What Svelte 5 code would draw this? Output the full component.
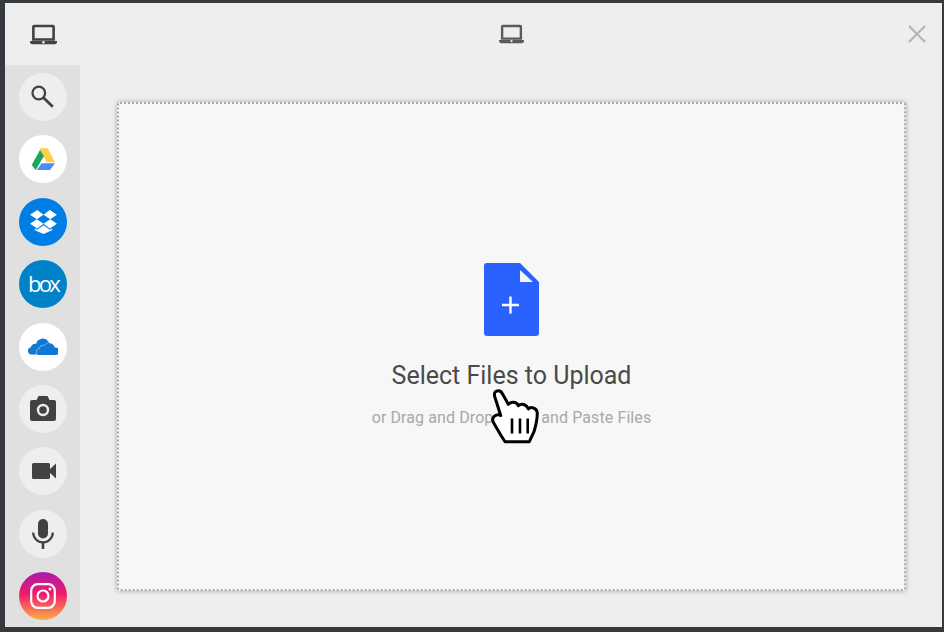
<script>
  const services = ['search', 'drive', 'dropbox', 'box', 'onedrive', 'camera', 'video', 'mic', 'instagram'];
  const bgClass = { drive: 'white', onedrive: 'white', dropbox: 'blue', box: 'boxblue', instagram: 'insta' };
</script>

{#snippet laptop(w, h)}
  <svg width={w} height={h} viewBox="0 0 26 20">
    <path d="M4 0.5h18a2 2 0 0 1 2 2V16H2V2.500a2 2 0 0 1 2-2zM4.500 3v10.600h17V3z" fill="currentColor" fill-rule="evenodd" />
    <path d="M0 16.300h26v1a2.200 2.200 0 0 1-2.200 2.200H2.200A2.200 2.200 0 0 1 0 17.300z" fill="currentColor" />
    <circle cx="13" cy="17.400" r="1.200" fill="#eee" />
  </svg>
{/snippet}

<div class="page">
  <div class="modal">
    <header>
      <div class="corner">{@render laptop(27, 21)}</div>
      <div class="title">{@render laptop(25, 20)}</div>
      <svg class="close" width="20" height="20" viewBox="0 0 20 20">
        <path d="M2 2l16 16M18 2L2 18" stroke="#b4b4b4" stroke-width="2.200" fill="none" />
      </svg>
    </header>
    <div class="body">
      <nav>
        {#each services as s}
          <div class="circle {bgClass[s] ?? ''}">
            {#if s === 'search'}
              <svg width="26" height="26" viewBox="0 0 26 26">
                <circle cx="8.800" cy="9" r="6.300" fill="none" stroke="#424242" stroke-width="2.300" />
                <path d="M13.500 13.800l9.300 9" stroke="#424242" stroke-width="2.800" />
              </svg>
            {:else if s === 'drive'}
              <svg width="24" height="22" viewBox="0 0 24 22">
                <path d="M8.300 0.300h8.400L24 14.300h-8.300z" fill="#ffcf4a" />
                <path d="M9 2L0.700 17l4 5L13 8z" fill="#1da462" />
                <path d="M10.700 15.300H24L19 22H5.700z" fill="#4c8bf5" />
              </svg>
            {:else if s === 'dropbox'}
              <svg width="27" height="24" viewBox="0 0 28 25">
                <path d="M7.500 0L0 5l7 4.600L14 5zM20.500 0L14 5l7 4.600L28 5zM0 14.200l7.500 5L14 14.400 7 9.600zM21 9.600l-7 4.800 6.500 4.800 7.500-5zM14 15.800l-6.600 4.800-2.400-1.400v1.800l9 4 9-4v-1.800l-2.400 1.400z" fill="#fff" />
              </svg>
            {:else if s === 'box'}
              <span class="boxlogo">box</span>
            {:else if s === 'onedrive'}
              <svg width="30" height="19" viewBox="0 0 30 19">
                <path d="M3.500 17.500A3.700 3.700 0 0 1 2.800 10.200 4.200 4.200 0 0 1 8 7 7 7 0 0 1 20.500 4.500L22 9 10 17.500z" fill="#0f78d4" />
                <path d="M11.500 18a3 3 0 0 1-.4-6 4.500 4.500 0 0 1 5.200-3.600 6 6 0 0 1 10.500 2.100A3.800 3.800 0 0 1 28 18z" fill="#0f78d4" stroke="#fff" stroke-width="1" paint-order="stroke" />
              </svg>
            {:else if s === 'camera'}
              <svg width="26" height="25" viewBox="0 0 26 25">
                <path d="M8.500 0h9l2 4H24a2 2 0 0 1 2 2v17a2 2 0 0 1-2 2H2a2 2 0 0 1-2-2V6a2 2 0 0 1 2-2h4.500z" fill="#424242" />
                <circle cx="13" cy="14" r="5" fill="none" stroke="#eee" stroke-width="2.400" />
              </svg>
            {:else if s === 'video'}
              <svg width="26" height="16" viewBox="-2 0 26 16">
                <path d="M1.500 0h15A1.500 1.500 0 0 1 18 1.500V6l6-5.500v15L18 10v4.500a1.500 1.500 0 0 1-1.500 1.500h-15A1.500 1.500 0 0 1 0 14.500v-13A1.500 1.500 0 0 1 1.500 0z" fill="#424242" />
              </svg>
            {:else if s === 'mic'}
              <svg width="22" height="30" viewBox="0 0 22 30">
                <rect x="6" y="0" width="10" height="19.500" rx="5" fill="#424242" />
                <path d="M1.200 13.500a9.800 9.800 0 0 0 19.600 0" fill="none" stroke="#424242" stroke-width="2.200" />
                <rect x="9.700" y="23" width="2.600" height="7" fill="#424242" />
              </svg>
            {:else if s === 'instagram'}
              <svg width="26" height="26" viewBox="0 0 26 26">
                <rect x="1.200" y="1.200" width="23.600" height="23.600" rx="6.500" fill="none" stroke="#fff" stroke-width="2.200" />
                <circle cx="13" cy="13" r="5.500" fill="none" stroke="#fff" stroke-width="2.200" />
                <circle cx="20" cy="6" r="1.500" fill="#fff" />
              </svg>
            {/if}
          </div>
        {/each}
      </nav>
      <main>
        <div class="dropzone">
          <svg class="file" width="55" height="73" viewBox="0 0 55 73">
            <path d="M3 0h33l19 19v51a3 3 0 0 1-3 3H3a3 3 0 0 1-3-3V3a3 3 0 0 1 3-3z" fill="#2962ff" />
            <path d="M36 7l13 12H36z" fill="#f3f5fa" />
            <path d="M25.300 33.500h2.400v7.300H35v2.400h-7.300v7.300h-2.400v-7.300H18v-2.400h7.300z" fill="#fff" />
          </svg>
          <div class="heading">Select Files to Upload</div>
          <div class="sub">or Drag and Drop, Copy and Paste Files</div>
          <svg class="cursor" width="52" height="58" viewBox="0 0 52 58">
            <path d="M9 4C6.500 4.500 6 7 6.700 9.500L12.700 28.500C10 26.500 6 28.500 5 31 4.300 33 5 35 6 36.500L12.700 48 17 54.700H41.300L46 44.700C48 38 49.300 32 49.300 26.300 49.300 21 43 19 40.300 22 38.500 17 33 16 30.300 18.700 29 14.500 23 14 20.300 17.300L14.700 7.300C13.500 4.500 11 3.500 9 4z" fill="#fff" stroke="#000" stroke-width="3" stroke-linejoin="round" />
            <path d="M24 31.500v15M32 31.500v15M39.700 31.500v15" stroke="#000" stroke-width="2.600" />
          </svg>
        </div>
      </main>
    </div>
  </div>
</div>

<style>
  :global(body) {
    margin: 0;
    background: #36393e;
  }

  .page {
    width: 944px;
    height: 632px;
    padding: 3px 2px 5px 5px;
    box-sizing: border-box;
    font-family: Roboto, "Liberation Sans", sans-serif;
  }

  .modal {
    height: 100%;
    background: #eeeeee;
    display: flex;
    flex-direction: column;
  }

  header {
    height: 62px;
    flex: none;
    position: relative;
    display: flex;
    align-items: center;
    color: #5a5a5a;
  }

  .corner {
    width: 76px;
    flex: none;
    display: flex;
    justify-content: center;
    color: #424242;
    line-height: 0;
  }

  .title {
    flex: 1;
    display: flex;
    justify-content: center;
    line-height: 0;
  }

  .close {
    position: absolute;
    right: 15px;
    top: 21px;
  }

  .body {
    flex: 1;
    display: flex;
    min-height: 0;
  }

  nav {
    width: 75px;
    flex: none;
    background: #e0e0e0;
    padding: 8px 0 0 14px;
    box-sizing: border-box;
    display: flex;
    flex-direction: column;
    gap: 14.4px;
  }

  .circle {
    width: 48px;
    height: 48px;
    flex: none;
    border-radius: 50%;
    background: #eeeeee;
    display: flex;
    align-items: center;
    justify-content: center;
  }

  .white { background: #fff; }
  .blue { background: #007ee5; }
  .boxblue { background: #0082c9; }
  .insta {
    background: linear-gradient(to bottom, #a91bad 0%, #f0196d 45%, #fcaf45 100%);
  }

  .boxlogo {
    color: #fff;
    font-size: 22px;
    letter-spacing: -2.800px;
    line-height: 1;
    font-family: "Open Sans", sans-serif;
    margin-top: -3px;
  }

  main {
    flex: 1;
    padding: 37px 36px 36px 37px;
    min-width: 0;
  }

  .dropzone {
    height: 100%;
    box-sizing: border-box;
    background: #f7f7f7;
    border: 2px dotted #a9a9a9;
    border-radius: 3px;
    box-shadow: 0 0 5px rgba(0, 0, 0, 0.3);
    display: flex;
    flex-direction: column;
    align-items: center;
    position: relative;
    padding-top: 159px;
  }

  .file {
    display: block;
  }

  .heading {
    font-size: 25px;
    line-height: 28px;
    color: #4a4a4a;
    margin-top: 26px;
  }

  .sub {
    font-size: 16px;
    letter-spacing: 0.100px;
    line-height: 20px;
    color: #a8a8a8;
    margin-top: 18px;
  }

  .cursor {
    position: absolute;
    left: 369px;
    top: 283px;
  }
</style>
